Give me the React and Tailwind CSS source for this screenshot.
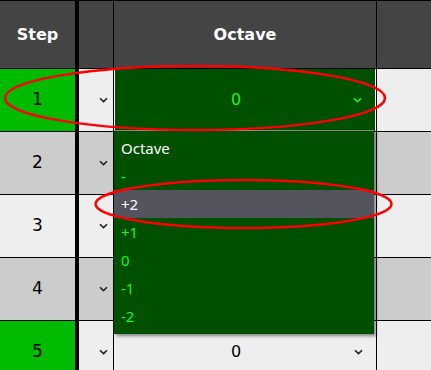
const Chevron = ({ className }) => (
  <svg width="9" height="6" viewBox="0 0 9 6" className={className}>
    <path d="M1 1.2 L4.5 4.6 L8 1.2" fill="none" stroke="currentColor" strokeWidth="1.6" />
  </svg>
);

const steps = [
  { n: 1, bg: "bg-[#eeeeee]", step: "bg-[#00bb00]" },
  { n: 2, bg: "bg-[#cccccc]", step: "bg-[#cccccc]" },
  { n: 3, bg: "bg-[#eeeeee]", step: "bg-[#eeeeee]" },
  { n: 4, bg: "bg-[#cccccc]", step: "bg-[#cccccc]" },
  { n: 5, bg: "bg-[#eeeeee]", step: "bg-[#00bb00]" },
];

const options = ["-", "+2", "+1", "0", "-1", "-2"];

const App = () => {
  return (
    <div className="relative w-[431px] h-[370px] overflow-hidden bg-[#eeeeee] font-['DejaVu_Sans',sans-serif]">
      {/* Header */}
      <div className="flex h-[69px] border-y border-black bg-[#444444] text-white font-bold text-[16px]">
        <div className="w-[79px] border-r-4 border-black flex items-center justify-center">Step</div>
        <div className="w-[35px] border-r border-black"></div>
        <div className="w-[263px] border-r border-black flex items-center justify-center">Octave</div>
        <div className="flex-1"></div>
      </div>

      {/* Rows */}
      {steps.map((s) => (
        <div key={s.n} className={`flex h-[63px] border-b border-black ${s.bg}`}>
          <div className={`w-[79px] border-r-4 border-black flex items-center justify-center text-[17px] text-black ${s.step}`}>
            {s.n}
          </div>
          <div className="w-[35px] border-r border-black flex items-center justify-end pr-[5px] text-[#222]">
            <Chevron />
          </div>
          <div className="w-[263px] border-r border-black flex">
            {s.n === 1 ? (
              <div className="flex-1 flex items-center bg-[#005000] border-x border-white text-[#22ee22]">
                <span className="flex-1 text-center text-[16px] pl-[6px]">0</span>
                <span className="w-[24px] flex justify-start pl-[2px]"><Chevron /></span>
              </div>
            ) : (
              <div className="flex-1 flex items-center text-black">
                <span className="flex-1 text-center text-[16px] pl-[6px]">0</span>
                <span className="w-[24px] flex justify-start pl-[2px] text-[#222]"><Chevron /></span>
              </div>
            )}
          </div>
          <div className="flex-1"></div>
        </div>
      ))}

      {/* Open dropdown */}
      <div className="absolute left-[114px] top-[130px] w-[260px] h-[204px] bg-[#005000] border-t border-[#888] shadow-[2px_2px_3px_rgba(0,0,0,0.45)] pt-[3px] font-['Noto_Sans',sans-serif] text-[15px]">
        <div className="h-[28px] flex items-center pl-[7px] text-white">Octave</div>
        {options.map((o) => (
          <div
            key={o}
            className={`h-[28px] flex items-center pl-[7px] ${o === "+2" ? "bg-[#54545f] text-white" : "text-[#22ee22]"}`}
          >
            {o}
          </div>
        ))}
      </div>

      {/* Annotation ellipses */}
      <svg className="absolute inset-0 pointer-events-none" width="431" height="370">
        <ellipse cx="195" cy="98" rx="190" ry="32" fill="none" stroke="#ff0000" strokeWidth="2.5" />
        <ellipse cx="243.5" cy="204" rx="148" ry="24" fill="none" stroke="#ff0000" strokeWidth="2.5" />
      </svg>
    </div>
  );
};

export default App;
